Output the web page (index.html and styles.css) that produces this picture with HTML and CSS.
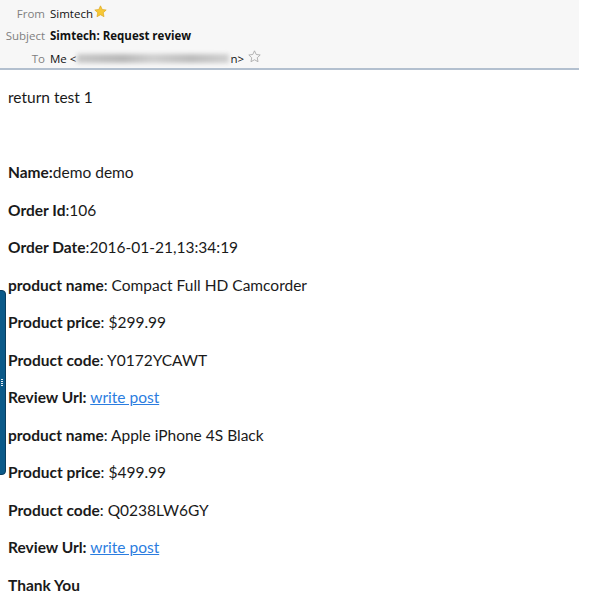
FILE: index.html
```html
<!DOCTYPE html>
<html lang="en">

<head>
	<meta charset="UTF-8">
	<meta name="viewport" content="width=device-width, initial-scale=1.0">
	<title>Simtech: Request review</title>
	<link rel="stylesheet" href="styles.css">
</head>

<body>

	<div class="mail-header">
		<div class="header-row">
			<span class="header-label">From</span>
			<span class="header-value">Simtech</span>
			<svg class="star" width="13" height="13" viewBox="0 0 24 24">
				<path d="M12 1.5l3.2 6.8 7.3.9-5.4 5.1 1.4 7.3L12 18l-6.5 3.6 1.4-7.3L1.5 9.2l7.3-.9z" fill="#f7c836" stroke="#dba51a" stroke-width="1.2" />
			</svg>
		</div>
		<div class="header-row">
			<span class="header-label">Subject</span>
			<span class="header-value subject">Simtech: Request review</span>
		</div>
		<div class="header-row">
			<span class="header-label">To</span>
			<span class="header-value">Me &lt;<span class="blurred"></span>n&gt;</span>
			<svg class="star star-empty" width="13" height="13" viewBox="0 0 24 24">
				<path d="M12 1.5l3.2 6.8 7.3.9-5.4 5.1 1.4 7.3L12 18l-6.5 3.6 1.4-7.3L1.5 9.2l7.3-.9z" fill="none" stroke="#a8a8a8" stroke-width="1.6" />
			</svg>
		</div>
	</div>

	<div class="mail-body">
		<p>return test 1</p>
		<p class="spacer"></p>
		<p><b>Name:</b>demo demo</p>
		<p><b>Order Id</b>:106</p>
		<p><b>Order Date</b>:2016-01-21,13:34:19</p>
		<p><b>product name</b>: Compact Full HD Camcorder</p>
		<p><b>Product price</b>: $299.99</p>
		<p><b>Product code</b>: Y0172YCAWT</p>
		<p><b>Review Url:</b> <a href="#">write post</a></p>
		<p><b>product name</b>: Apple iPhone 4S Black</p>
		<p><b>Product price</b>: $499.99</p>
		<p><b>Product code</b>: Q0238LW6GY</p>
		<p><b>Review Url:</b> <a href="#">write post</a></p>
		<p><b>Thank You</b></p>
	</div>

	<div class="side-tab">
		<span class="grip"></span>
	</div>

</body>

</html>
```

FILE: styles.css
```css
body {
	margin: 0;
	background-color: white;
	font-family: 'Lato', 'Liberation Sans', sans-serif;
	color: #1a1a1a;
}

.mail-header {
	background-color: #f7f7f7;
	width: 579px;
	height: 70px;
	border-bottom: 2px solid #b3c0cf;
	padding-top: 2px;
	box-sizing: border-box;
	font-family: 'Open Sans', sans-serif;
	font-size: 11.5px;
}

.header-row {
	display: flex;
	align-items: center;
	height: 22.5px;
}

.header-label {
	width: 45px;
	text-align: right;
	color: #808080;
	margin-right: 5px;
}

.header-value {
	color: #111;
	display: flex;
	align-items: center;
}

.subject {
	font-weight: bold;
}

.blurred {
	display: inline-block;
	width: 152px;
	height: 9px;
	margin: 0 1px;
	background: linear-gradient(90deg, #c8c8c8, #b8b8b8 30%, #cfcfcf 50%, #bdbdbd 75%, #d0d0d0);
	filter: blur(2px);
}

.star {
	margin-left: 1px;
	margin-top: -3px;
}

.star-empty {
	margin-left: 4px;
}

.mail-body {
	padding: 18px 8px 12px;
	font-size: 15.5px;
}

.mail-body p {
	margin: 0 0 18.5px;
	line-height: 19px;
}

.mail-body .spacer {
	height: 19px;
}

.mail-body b {
	font-weight: bold;
}

.mail-body a {
	color: #2b7de0;
}

.side-tab {
	position: absolute;
	left: -6px;
	top: 290px;
	width: 12px;
	height: 185px;
	background-color: #0b5a89;
	border: 1px solid #0a3d5e;
	border-radius: 4px;
	box-sizing: border-box;
	display: flex;
	justify-content: flex-end;
	align-items: center;
}

.grip {
	width: 2px;
	height: 7px;
	margin-right: 2px;
	background: repeating-linear-gradient(#e6eef5 0 1px, transparent 1px 2px);
}
```
